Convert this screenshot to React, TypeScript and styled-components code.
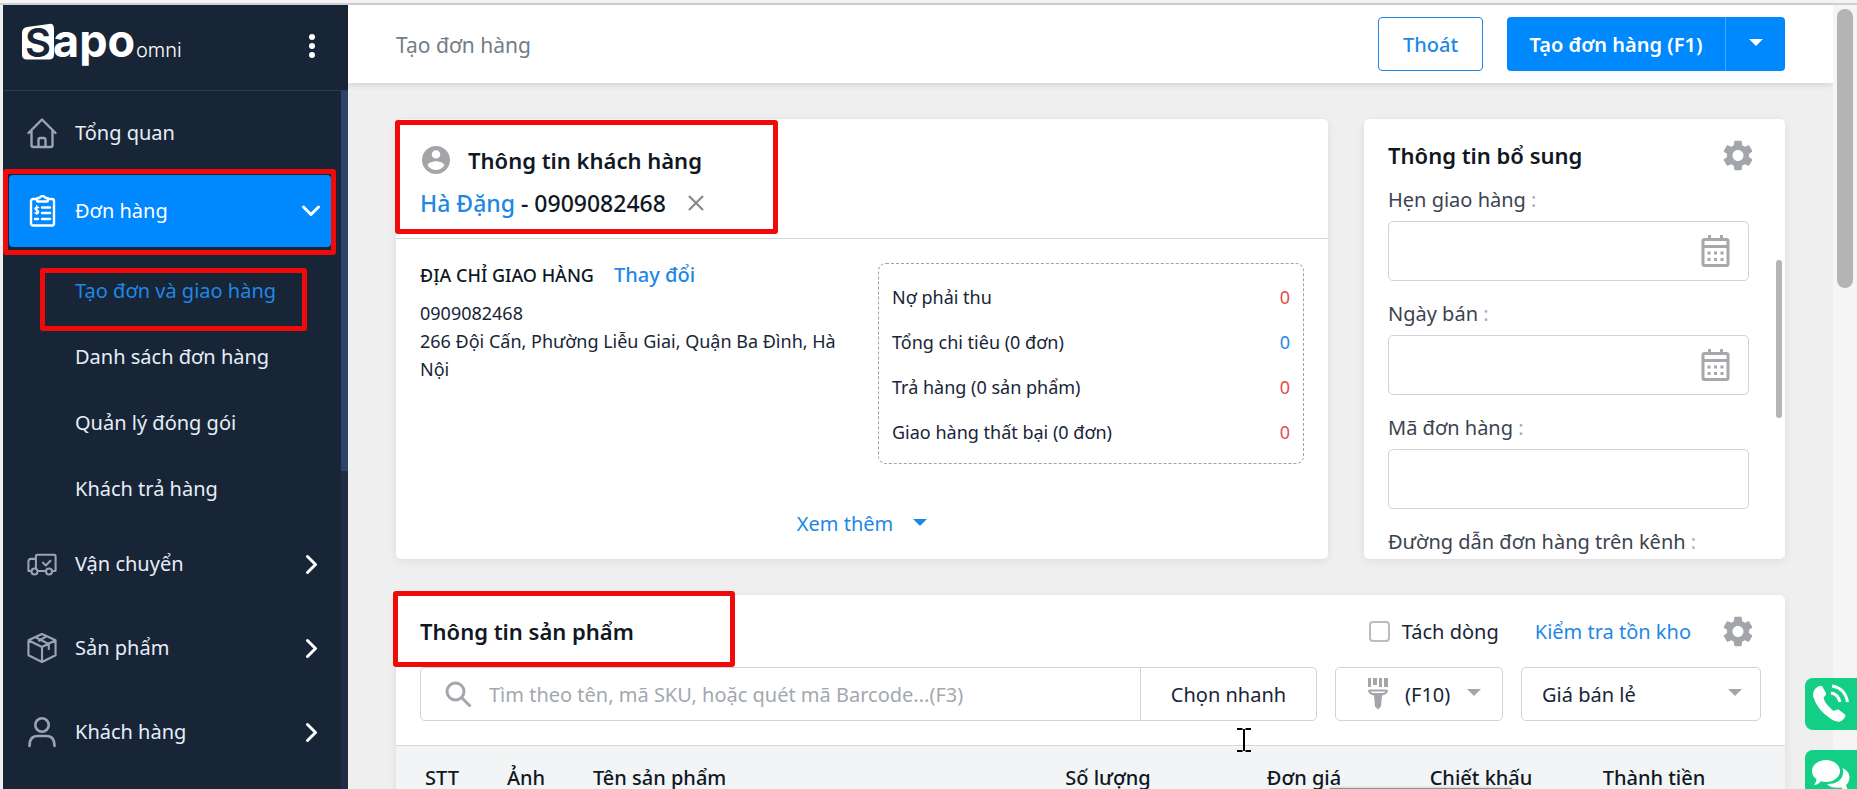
import React, { useId } from "react";
import styled, { createGlobalStyle } from "styled-components";

const GlobalStyle = createGlobalStyle`
  *, *::before, *::after { box-sizing: border-box; }
  body {
    margin: 0;
    background: #efefef;
    color: #182537;
    font-family: "Noto Sans", "Open Sans", sans-serif;
    font-size: 18px;
  }
  button, input, select { font: inherit; color: inherit; }
  a { color: inherit; text-decoration: none; }
  h1, h2, h3, p, ul, dl, dd { margin: 0; padding: 0; }
`;

const Shell = styled.div`
  display: flex;
  flex-direction: column;
  height: 100vh;
  overflow: hidden;
`;

const TopEdge = styled.div`
  flex: none;
  height: 5px;
  background: #f3f3f5;
  border-bottom: 2px solid #cfcfd3;
`;

const Body = styled.div`
  display: flex;
  flex: 1;
  min-height: 0;
  padding-left: 3px;
`;

/* ---------- Sidebar ---------- */

const Sidebar = styled.aside`
  flex: none;
  display: flex;
  flex-direction: column;
  width: 345px;
  background: #182537;
  color: #e6eef7;
`;

const Brand = styled.div`
  flex: none;
  display: flex;
  align-items: center;
  justify-content: space-between;
  height: 86px;
  padding: 0 26px 4px 17px;
  border-bottom: 1px solid #2c3b52;
`;

const LogoDrawing = styled.svg`
  overflow: visible;
`;

const IconButton = styled.button`
  display: inline-flex;
  align-items: center;
  justify-content: center;
  padding: 0;
  border: 0;
  background: none;
  color: #a2a8af;
  cursor: pointer;
`;

const NavArea = styled.div`
  display: flex;
  flex: 1;
  min-height: 0;
`;

const Nav = styled.nav`
  flex: 1;
  min-width: 0;
  padding: 0 10px 0 6px;
  overflow: hidden;
`;

const SideTrack = styled.div`
  width: 7px;
  background: #222b44;
`;

const SideThumb = styled.div`
  height: 380px;
  max-height: 55%;
  background: #2e426a;
`;

const NavSlot = styled.div<{ $open?: boolean }>`
  position: relative;
  padding: ${(p) => (p.$open ? "0 0 6px" : "6px 0")};
`;

const NavItem = styled.a<{ $active?: boolean }>`
  display: flex;
  align-items: center;
  gap: 18px;
  height: 72px;
  padding: 0 10px 0 18px;
  border-radius: 4px;
  font-size: 20px;
  line-height: 28px;
  color: ${(p) => (p.$active ? "#ffffff" : "#e6eef7")};
  background: ${(p) => (p.$active ? "#0088ff" : "transparent")};
  svg { flex: none; }
  svg:first-child { color: ${(p) => (p.$active ? "#ffffff" : "#9aa5b1")}; }
  svg:last-child { color: #ffffff; }
`;

const NavText = styled.span`
  flex: 1;
`;

const SubNav = styled.ul`
  list-style: none;
  padding: 5px 0 0;
`;

const SubItem = styled.li`
  position: relative;
`;

const SubLink = styled.a<{ $active?: boolean }>`
  display: flex;
  align-items: center;
  height: 66px;
  padding: 0 0 2px 66px;
  font-size: 20px;
  color: ${(p) => (p.$active ? "#1e88e5" : "#e6eef7")};
`;

/* ---------- Highlight frames drawn over the page ---------- */

const Mark = styled.div<{ $top: number; $left: number; $width: number; $height: number }>`
  position: absolute;
  z-index: 2;
  top: ${(p) => p.$top}px;
  left: ${(p) => p.$left}px;
  width: ${(p) => p.$width}px;
  height: ${(p) => p.$height}px;
  border: 5px solid #f00a0a;
  border-radius: 3px;
  pointer-events: none;
`;

/* ---------- Main ---------- */

const Main = styled.main`
  flex: 1;
  min-width: 0;
  display: flex;
  flex-direction: column;
`;

const Header = styled.header`
  flex: none;
  display: flex;
  align-items: center;
  gap: 24px;
  height: 78px;
  padding: 0 48px;
  background: #ffffff;
  box-shadow: 0 2px 6px rgba(0, 0, 0, 0.12);
`;

const PageTitle = styled.h1`
  flex: 1;
  padding-top: 2px;
  font-size: 21px;
  font-weight: 400;
  color: #747c87;
`;

const OutlineButton = styled.button`
  height: 54px;
  width: 105px;
  border: 1px solid #1e88e5;
  border-radius: 4px;
  background: #ffffff;
  color: #1e88e5;
  font-size: 20px;
  font-weight: 500;
`;

const SplitButton = styled.div`
  display: flex;
  height: 54px;
  border-radius: 4px;
  overflow: hidden;
  background: #0088ff;
`;

const SplitPart = styled.button<{ $width: number }>`
  display: flex;
  align-items: center;
  justify-content: center;
  width: ${(p) => p.$width}px;
  padding: 0;
  border: 0;
  background: none;
  color: #ffffff;
  font-size: 20px;
  font-weight: 600;
  & + & { border-left: 1px solid #4aa9fb; }
`;

const Content = styled.div`
  flex: 1;
  min-height: 0;
  display: grid;
  grid-template-columns: minmax(0, 1fr) 421px;
  grid-template-rows: 440px auto;
  gap: 36px;
  padding: 36px 48px 0;
`;

const Card = styled.section<{ $wide?: boolean }>`
  position: relative;
  grid-column: ${(p) => (p.$wide ? "1 / -1" : "auto")};
  display: flex;
  flex-direction: column;
  background: #ffffff;
  border-radius: 5px;
  box-shadow: 0 2px 8px rgba(0, 0, 0, 0.08);
`;

const CardTitle = styled.h2`
  font-size: 22px;
  line-height: 32px;
  font-weight: 600;
  color: #0f1824;
`;

const CustomerHead = styled.div`
  display: flex;
  flex-direction: column;
  gap: 11px;
  height: 120px;
  padding: 25px 24px 0;
  border-bottom: 1px solid #d3d5d7;
`;

const Line = styled.div<{ $gap: number }>`
  display: flex;
  align-items: center;
  gap: ${(p) => p.$gap}px;
`;

const CustomerName = styled.p`
  font-size: 23px;
  line-height: 32px;
  font-weight: 500;
  color: #0f1824;
`;

const Link = styled.a<{ $strong?: boolean }>`
  color: #1e88e5;
  font-weight: ${(p) => (p.$strong ? 500 : "inherit")};
`;

const CustomerBody = styled.div`
  display: grid;
  grid-template-columns: minmax(0, 1fr) 426px;
  gap: 28px;
  padding: 24px 24px 0;
`;

const Address = styled.div`
  font-size: 18px;
  line-height: 28px;
`;

const AddressTitle = styled.h3`
  font-size: 18px;
  line-height: 24px;
  font-weight: 500;
  color: #0f1824;
`;

const AddressLink = styled(Link)`
  font-size: 20px;
  line-height: 24px;
`;

const AddressText = styled.p`
  padding-top: 12px;
`;

const Stats = styled.dl`
  padding: 10px 13px 9px;
  border: 1px dashed #9fa3a8;
  border-radius: 8px;
`;

const Stat = styled.div`
  display: flex;
  align-items: center;
  justify-content: space-between;
  height: 45px;
`;

const StatValue = styled.dd<{ $blue?: boolean }>`
  color: ${(p) => (p.$blue ? "#1e88e5" : "#e0504f")};
`;

const MoreButton = styled.button`
  display: flex;
  align-items: center;
  align-self: center;
  gap: 20px;
  margin-top: 45px;
  padding: 0;
  border: 0;
  background: none;
  color: #1e88e5;
  font-size: 20px;
  line-height: 30px;
`;

const ExtraHead = styled.div`
  display: flex;
  align-items: center;
  justify-content: space-between;
  padding: 20px 32px 8px 24px;
`;

const ExtraBody = styled.div`
  display: flex;
  flex: 1;
  min-height: 0;
  overflow: hidden;
`;

const Fields = styled.div`
  flex: 1;
  min-width: 0;
  padding-left: 24px;
`;

const Field = styled.div`
  padding-bottom: 12px;
`;

const FieldLabel = styled.label`
  display: block;
  line-height: 42px;
  font-size: 20px;
  color: #3b4350;
  &::after { content: " :"; color: #a9aeb4; }
`;

const InputBox = styled.div`
  display: flex;
  align-items: center;
  height: 60px;
  padding-right: 18px;
  border: 1px solid #d0d2d5;
  border-radius: 5px;
  color: #a6a8ab;
`;

const TextInput = styled.input`
  flex: 1;
  min-width: 0;
  height: 100%;
  padding: 0 17px;
  border: 0;
  outline: 0;
  background: none;
  font-size: 20px;
  &::placeholder { color: #a3a8ae; opacity: 1; }
`;

const ExtraTrack = styled.div`
  flex: none;
  width: 36px;
  padding: 81px 3px 0 27px;
`;

const ExtraThumb = styled.div`
  height: 158px;
  border-radius: 3px;
  background: #b4b4b4;
`;

const ProductHead = styled.div`
  display: flex;
  align-items: center;
  padding: 20px 32px 20px 24px;
`;

const Spacer = styled.div`
  flex: 1;
`;

const CheckLabel = styled.label`
  display: flex;
  align-items: center;
  gap: 12px;
  margin-right: 36px;
  font-size: 20px;
`;

const CheckBox = styled.input`
  appearance: none;
  width: 21px;
  height: 21px;
  margin: 0;
  border: 2px solid #b9bcc0;
  border-radius: 4px;
  background: #ffffff;
`;

const StockLink = styled(Link)`
  margin-right: 32px;
  font-size: 20px;
`;

const FilterRow = styled.div`
  display: flex;
  gap: 18px;
  padding: 0 24px 24px;
`;

const SearchGroup = styled.div`
  display: flex;
  flex: 1;
  align-items: center;
  height: 54px;
  padding-left: 24px;
  border: 1px solid #d0d2d5;
  border-radius: 5px;
  color: #a3a6aa;
`;

const QuickPick = styled.button`
  width: 176px;
  height: 100%;
  border: 0;
  border-left: 1px solid #d0d2d5;
  background: none;
  color: #182537;
  font-size: 20px;
`;

const ScanButton = styled.button`
  display: flex;
  align-items: center;
  gap: 17px;
  width: 168px;
  height: 54px;
  padding: 0 18px 0 32px;
  border: 1px solid #d0d2d5;
  border-radius: 5px;
  background: #ffffff;
  font-size: 20px;
  svg { flex: none; color: #a2a6ab; }
`;

const SelectBox = styled.div`
  display: flex;
  align-items: center;
  width: 240px;
  height: 54px;
  padding: 0 18px 0 20px;
  border: 1px solid #d0d2d5;
  border-radius: 5px;
  color: #a2a6ab;
`;

const Select = styled.select`
  appearance: none;
  flex: 1;
  height: 100%;
  padding: 0;
  border: 0;
  outline: 0;
  background: none;
  color: #182537;
  font-size: 20px;
`;

const Table = styled.table`
  width: 100%;
  table-layout: fixed;
  border-collapse: collapse;
  background: #f2f4f5;
  border-top: 1px solid #d5d9db;
`;

const HeadCell = styled.th<{ $width?: number; $left?: boolean }>`
  width: ${(p) => (p.$width ? `${p.$width}px` : "auto")};
  height: 64px;
  padding: 0 0 0 ${(p) => (p.$left ? 29 : 0)}px;
  text-align: ${(p) => (p.$left ? "left" : "center")};
  font-size: 20px;
  font-weight: 500;
  color: #0f1824;
`;

/* ---------- Page scrollbar and floating pieces ---------- */

const PageTrack = styled.div`
  flex: none;
  width: 24px;
  padding: 4px;
  background: #f5f5f5;
`;

const PageThumb = styled.div`
  height: 36%;
  border-radius: 8px;
  background: #b4b4b4;
`;

const Floating = styled.div`
  position: fixed;
  right: 0;
  bottom: -13px;
  display: flex;
  flex-direction: column;
  gap: 20px;
`;

const FloatButton = styled.button`
  display: flex;
  align-items: center;
  justify-content: center;
  width: 52px;
  height: 52px;
  padding: 0;
  border: 0;
  border-radius: 8px 0 0 8px;
  background: #13cf86;
  color: #ffffff;
`;

const Cursor = styled.svg`
  position: fixed;
  left: 1236px;
  top: 727px;
  pointer-events: none;
`;

const BottomShade = styled.div`
  position: fixed;
  left: 1330px;
  bottom: 0;
  width: 182px;
  height: 1px;
  background: #8f9194;
  box-shadow: 0 0 3px rgba(0, 0, 0, 0.4);
`;

/* ---------- Drawings ---------- */

const Logo = () => (
  <LogoDrawing width="166" height="50" viewBox="0 0 166 50" role="img" aria-label="Sapo omni">
    <path d="M7 6 29 3q5-1 5 5v25.500q0 5-5 5H7q-5 0-5-5V12q0-5 5-6Z" fill="#fff" />
    <text x="5" y="36" fontFamily="Inter, sans-serif" fontWeight="600" fontSize="40" fill="#182537">S</text>
    <text x="33" y="36" fontFamily="Inter, sans-serif" fontWeight="700" fontSize="45" fill="#fff">apo</text>
    <text x="116" y="36" fontFamily="Inter, sans-serif" fontWeight="300" fontSize="20" fill="#fff">omni</text>
  </LogoDrawing>
);

const Dots = () => (
  <svg width="20" height="26" viewBox="0 0 20 26" fill="#fff">
    <circle cx="10" cy="4" r="3" /><circle cx="10" cy="13" r="3" /><circle cx="10" cy="22" r="3" />
  </svg>
);

const line = { fill: "none", stroke: "currentColor", strokeWidth: 2, strokeLinecap: "round", strokeLinejoin: "round" } as const;

const HomeIcon = () => (
  <svg width="30" height="32" viewBox="0 0 30 32" {...line} strokeWidth={2.4}>
    <path d="M1.500 16 15 2.500 28.500 16M4.500 14v14q0 2 2 2h17q2 0 2-2V14M11.500 30v-7q0-2 2-2h3q2 0 2 2v7" />
  </svg>
);

const OrderIcon = () => (
  <svg width="30" height="32" viewBox="0 0 30 32" {...line} strokeWidth={2.4}>
    <rect x="4" y="4" width="23" height="26.500" rx="2" />
    <path d="M10 5.500V4q0-1 1-1h1.500q1-2 3-2t3 2H20q1 0 1 1v1.500q0 1-1 1h-9q-1 0-1-1Z" fill="#0088ff" />
    <path d="M15 12.500h8M15 18h8M15 24h8M8 24h3" />
    <path d="M11.500 12.500q-3-1-3.500 1 0 1.400 1.700 1.700 1.900.3 1.900 1.800-.4 1.900-3.800.9M9.700 10.700v8.600" strokeWidth="1.500" />
  </svg>
);

const TruckIcon = () => (
  <svg width="30" height="23" viewBox="0 0 32 24" {...line} strokeWidth={2.2}>
    <path d="M9 6H4Q1.500 6 1.500 9v10h2.800M9.500 16V3q0-1.500 1.500-1.500h18q1.500 0 1.500 1.500v15q0 1-1 1h-2M12 19h8M17 10l3 3 5-5" />
    <circle cx="8" cy="19.500" r="3.200" /><circle cx="23.500" cy="19.500" r="3.200" />
  </svg>
);

const BoxIcon = () => (
  <svg width="30" height="32" viewBox="0 0 31 32" {...line} strokeWidth={2.2}>
    <path d="M15.500 1.500 29.500 8v15.500l-14 7-14-7V8ZM1.500 8l14 7 14-7M15.500 15v15.500M8.500 4.800l14 7V17M12.500 8.500 20 4" />
  </svg>
);

const PersonIcon = () => (
  <svg width="30" height="32" viewBox="0 0 30 32" {...line} strokeWidth={2.6}>
    <circle cx="15" cy="9" r="6.700" /><path d="M2.500 30q0-10 8-10h9q8 0 8 10" />
  </svg>
);

const ChevronDown = () => (
  <svg width="20" height="14" viewBox="0 0 20 14" {...line} strokeWidth={3}><path d="M2.500 3 10 10.500 17.500 3" /></svg>
);

const ChevronRight = () => (
  <svg width="20" height="20" viewBox="0 0 20 20" {...line} strokeWidth={3}><path d="M6.500 2.500 14.500 10.500 6.500 18.500" /></svg>
);

const Caret = () => (
  <svg width="14" height="12" viewBox="0 0 14 12" fill="currentColor"><path d="M0 1h14L7 8Z" /></svg>
);

const Avatar = () => (
  <svg width="30" height="28" viewBox="0.570 2 21.430 20" fill="#a3a5a8">
    <path d="M12 2C6.480 2 2 6.480 2 12s4.480 10 10 10 10-4.480 10-10S17.520 2 12 2zm0 3c1.660 0 3 1.340 3 3s-1.340 3-3 3-3-1.340-3-3 1.340-3 3-3zm0 14.200c-2.500 0-4.710-1.280-6-3.220.030-1.990 4-3.080 6-3.080 1.990 0 5.970 1.090 6 3.080-1.290 1.940-3.500 3.220-6 3.220z" />
  </svg>
);

const CloseIcon = () => (
  <svg width="16" height="16" viewBox="0 0 16 16" stroke="#85898e" strokeWidth="2.200"><path d="m1 1 14 14M15 1 1 15" /></svg>
);

const Gear = () => (
  <svg width="30" height="31" viewBox="2.200 2 19.600 20" fill="#a2a6ab">
    <path d="M19.140 12.940c.040-.300.060-.610.060-.940 0-.320-.020-.640-.070-.940l2.030-1.580c.180-.140.230-.410.120-.610l-1.920-3.320c-.120-.220-.370-.290-.590-.220l-2.390.960c-.500-.380-1.030-.700-1.620-.940l-.360-2.540c-.040-.240-.240-.410-.480-.410h-3.840c-.240 0-.430.170-.470.410l-.360 2.540c-.590.240-1.130.570-1.620.940l-2.390-.960c-.220-.080-.470 0-.590.220L2.740 8.870c-.120.210-.080.470.120.610l2.030 1.580c-.050.300-.090.630-.090.940s.020.640.070.940l-2.030 1.580c-.180.140-.230.410-.120.610l1.920 3.320c.120.220.370.290.590.220l2.390-.960c.500.380 1.030.700 1.620.940l.360 2.540c.050.240.240.410.480.410h3.840c.240 0 .440-.170.470-.410l.360-2.540c.590-.240 1.130-.560 1.620-.940l2.390.960c.220.080.470 0 .590-.220l1.920-3.320c.120-.220.070-.470-.120-.610l-2.010-1.580zM12 15.600c-1.980 0-3.600-1.620-3.600-3.600s1.620-3.600 3.600-3.600 3.600 1.620 3.600 3.600-1.620 3.600-3.600 3.600z" />
  </svg>
);

const CalendarIcon = () => (
  <svg width="29" height="32" viewBox="0 0 29 32" fill="none" stroke="currentColor" strokeWidth="3">
    <rect x="2" y="4.500" width="25" height="26" rx="1.500" /><path d="M2 11.500h25" /><path d="M8.500 0v5M20.500 0v5" />
    <path d="M6.500 18h3M13 18h3M19.500 18h3M6.500 24.500h3M13 24.500h3M19.500 24.500h3" />
  </svg>
);

const SearchIcon = () => (
  <svg width="27" height="27" viewBox="0 0 27 27" fill="none" stroke="currentColor" strokeWidth="3">
    <circle cx="10.500" cy="10.500" r="8.500" /><path d="m16.500 16.500 9 9" />
  </svg>
);

const ScannerIcon = () => (
  <svg width="20" height="32" viewBox="0 0 20 32" fill="currentColor">
    <path d="M0 0h3v9H0zM5 0h4v7H5zM11 0h3v9h-3zM16 0h4v9h-4zM0 13q0-1.500 1.500-1.500h17q1.500 0 1.500 1.500-1 3.500-6 4.500l-1 11-3 3-3-3-1-11Q1 16.500 0 13Zm2.500.5q.5 1 3 1.500h9q2.500-.5 3-1.500Z" />
  </svg>
);

const PhoneIcon = () => (
  <svg width="38" height="40" viewBox="0 0 38 40" fill="currentColor">
    <path d="M3 5q4-4 7-3l4 7q.5 2-2.500 4.500 1 6 10 13.500 3.500-2 5-1.500l6.500 5q1.500 2-3 6-4 3-11-1.500Q5 26 1 12 .5 8 3 5Z" />
    <path d="M20 2q13 2 15.500 16M19 9q7 1 9 9" fill="none" stroke="currentColor" strokeWidth="3" />
  </svg>
);

const ChatIcon = () => (
  <svg width="38" height="34" viewBox="0 0 38 34" fill="currentColor">
    <path d="M14 1c8 0 14 5 14 11s-6 11-14 11q-3 0-5-.7Q6 26 2 26q2.500-3 2.500-6Q0 17 0 12C0 6 6 1 14 1Z" />
    <path d="M30.500 9q6.500 3 7 9 0 5-3.500 8 .5 3 3 6-5 0-8-3.500-9 1.500-14-3.500 14 0 16-10 .5-3-.5-6Z" />
  </svg>
);

/* ---------- Parts ---------- */

function ExtraField({ label, date }: { label: string; date?: boolean }) {
  const id = useId();
  return (
    <Field>
      <FieldLabel htmlFor={id}>{label}</FieldLabel>
      <InputBox>
        <TextInput id={id} type="text" />
        {date && <CalendarIcon />}
      </InputBox>
    </Field>
  );
}

const stats = [
  { label: "Nợ phải thu", value: 0 },
  { label: "Tổng chi tiêu (0 đơn)", value: 0, blue: true },
  { label: "Trả hàng (0 sản phẩm)", value: 0 },
  { label: "Giao hàng thất bại (0 đơn)", value: 0 },
];

export default function App() {
  return (
    <Shell>
      <GlobalStyle />
      <TopEdge />
      <Body>
        <Sidebar>
          <Brand>
            <Logo />
            <IconButton aria-label="Menu"><Dots /></IconButton>
          </Brand>
          <NavArea>
            <Nav>
              <NavSlot>
                <NavItem href="#"><HomeIcon /><NavText>Tổng quan</NavText></NavItem>
              </NavSlot>
              <NavSlot $open>
                <NavItem href="#" $active><OrderIcon /><NavText>Đơn hàng</NavText><ChevronDown /></NavItem>
                <Mark $top={-6} $left={-6} $width={333} $height={86} />
              </NavSlot>
              <SubNav>
                <SubItem>
                  <SubLink href="#" $active>Tạo đơn và giao hàng</SubLink>
                  <Mark $top={10} $left={31} $width={267} $height={63} />
                </SubItem>
                <SubItem><SubLink href="#">Danh sách đơn hàng</SubLink></SubItem>
                <SubItem><SubLink href="#">Quản lý đóng gói</SubLink></SubItem>
                <SubItem><SubLink href="#">Khách trả hàng</SubLink></SubItem>
              </SubNav>
              <NavSlot>
                <NavItem href="#"><TruckIcon /><NavText>Vận chuyển</NavText><ChevronRight /></NavItem>
              </NavSlot>
              <NavSlot>
                <NavItem href="#"><BoxIcon /><NavText>Sản phẩm</NavText><ChevronRight /></NavItem>
              </NavSlot>
              <NavSlot>
                <NavItem href="#"><PersonIcon /><NavText>Khách hàng</NavText><ChevronRight /></NavItem>
              </NavSlot>
            </Nav>
            <SideTrack><SideThumb /></SideTrack>
          </NavArea>
        </Sidebar>

        <Main>
          <Header>
            <PageTitle>Tạo đơn hàng</PageTitle>
            <OutlineButton>Thoát</OutlineButton>
            <SplitButton>
              <SplitPart $width={218}>Tạo đơn hàng (F1)</SplitPart>
              <SplitPart $width={60} aria-label="Tùy chọn"><Caret /></SplitPart>
            </SplitButton>
          </Header>

          <Content>
            <Card>
              <Mark $top={1} $left={-1} $width={383} $height={114} />
              <CustomerHead>
                <Line $gap={18}><Avatar /><CardTitle>Thông tin khách hàng</CardTitle></Line>
                <Line $gap={22}>
                  <CustomerName><Link href="#">Hà Đặng</Link> - 0909082468</CustomerName>
                  <IconButton aria-label="Bỏ chọn"><CloseIcon /></IconButton>
                </Line>
              </CustomerHead>
              <CustomerBody>
                <Address>
                  <Line $gap={20}>
                    <AddressTitle>ĐỊA CHỈ GIAO HÀNG</AddressTitle>
                    <AddressLink href="#" $strong>Thay đổi</AddressLink>
                  </Line>
                  <AddressText>
                    0909082468<br />266 Đội Cấn, Phường Liễu Giai, Quận Ba Đình, Hà Nội
                  </AddressText>
                </Address>
                <Stats>
                  {stats.map((s) => (
                    <Stat key={s.label}>
                      <dt>{s.label}</dt>
                      <StatValue $blue={s.blue}>{s.value}</StatValue>
                    </Stat>
                  ))}
                </Stats>
              </CustomerBody>
              <MoreButton>Xem thêm <Caret /></MoreButton>
            </Card>

            <Card>
              <ExtraHead>
                <CardTitle>Thông tin bổ sung</CardTitle>
                <IconButton aria-label="Cài đặt"><Gear /></IconButton>
              </ExtraHead>
              <ExtraBody>
                <Fields>
                  <ExtraField label="Hẹn giao hàng" date />
                  <ExtraField label="Ngày bán" date />
                  <ExtraField label="Mã đơn hàng" />
                  <ExtraField label="Đường dẫn đơn hàng trên kênh" />
                </Fields>
                <ExtraTrack><ExtraThumb /></ExtraTrack>
              </ExtraBody>
            </Card>

            <Card $wide>
              <Mark $top={-4} $left={-3} $width={342} $height={76} />
              <ProductHead>
                <CardTitle>Thông tin sản phẩm</CardTitle>
                <Spacer />
                <CheckLabel><CheckBox type="checkbox" />Tách dòng</CheckLabel>
                <StockLink href="#">Kiểm tra tồn kho</StockLink>
                <IconButton aria-label="Cài đặt"><Gear /></IconButton>
              </ProductHead>
              <FilterRow>
                <SearchGroup>
                  <SearchIcon />
                  <TextInput aria-label="Tìm sản phẩm" placeholder="Tìm theo tên, mã SKU, hoặc quét mã Barcode...(F3)" />
                  <QuickPick>Chọn nhanh</QuickPick>
                </SearchGroup>
                <ScanButton><ScannerIcon />(F10)<Caret /></ScanButton>
                <SelectBox>
                  <Select aria-label="Chính sách giá" defaultValue="retail">
                    <option value="retail">Giá bán lẻ</option>
                  </Select>
                  <Caret />
                </SelectBox>
              </FilterRow>
              <Table>
                <thead>
                  <tr>
                    <HeadCell $width={92}>STT</HeadCell>
                    <HeadCell $width={76}>Ảnh</HeadCell>
                    <HeadCell $left>Tên sản phẩm</HeadCell>
                    <HeadCell $width={208}>Số lượng</HeadCell>
                    <HeadCell $width={184}>Đơn giá</HeadCell>
                    <HeadCell $width={170}>Chiết khấu</HeadCell>
                    <HeadCell $width={176}>Thành tiền</HeadCell>
                    <HeadCell $width={43} />
                  </tr>
                </thead>
              </Table>
            </Card>
          </Content>
        </Main>
        <PageTrack><PageThumb /></PageTrack>
      </Body>

      <Floating>
        <FloatButton aria-label="Gọi điện"><PhoneIcon /></FloatButton>
        <FloatButton aria-label="Trò chuyện"><ChatIcon /></FloatButton>
      </Floating>
      <BottomShade />
      <Cursor width="16" height="26" viewBox="0 0 16 26" fill="none" stroke="#000" strokeWidth="2">
        <path d="M1 2h5.500M9.500 2H15M1 24h5.500M9.500 24H15M8 2v22" />
      </Cursor>
    </Shell>
  );
}
